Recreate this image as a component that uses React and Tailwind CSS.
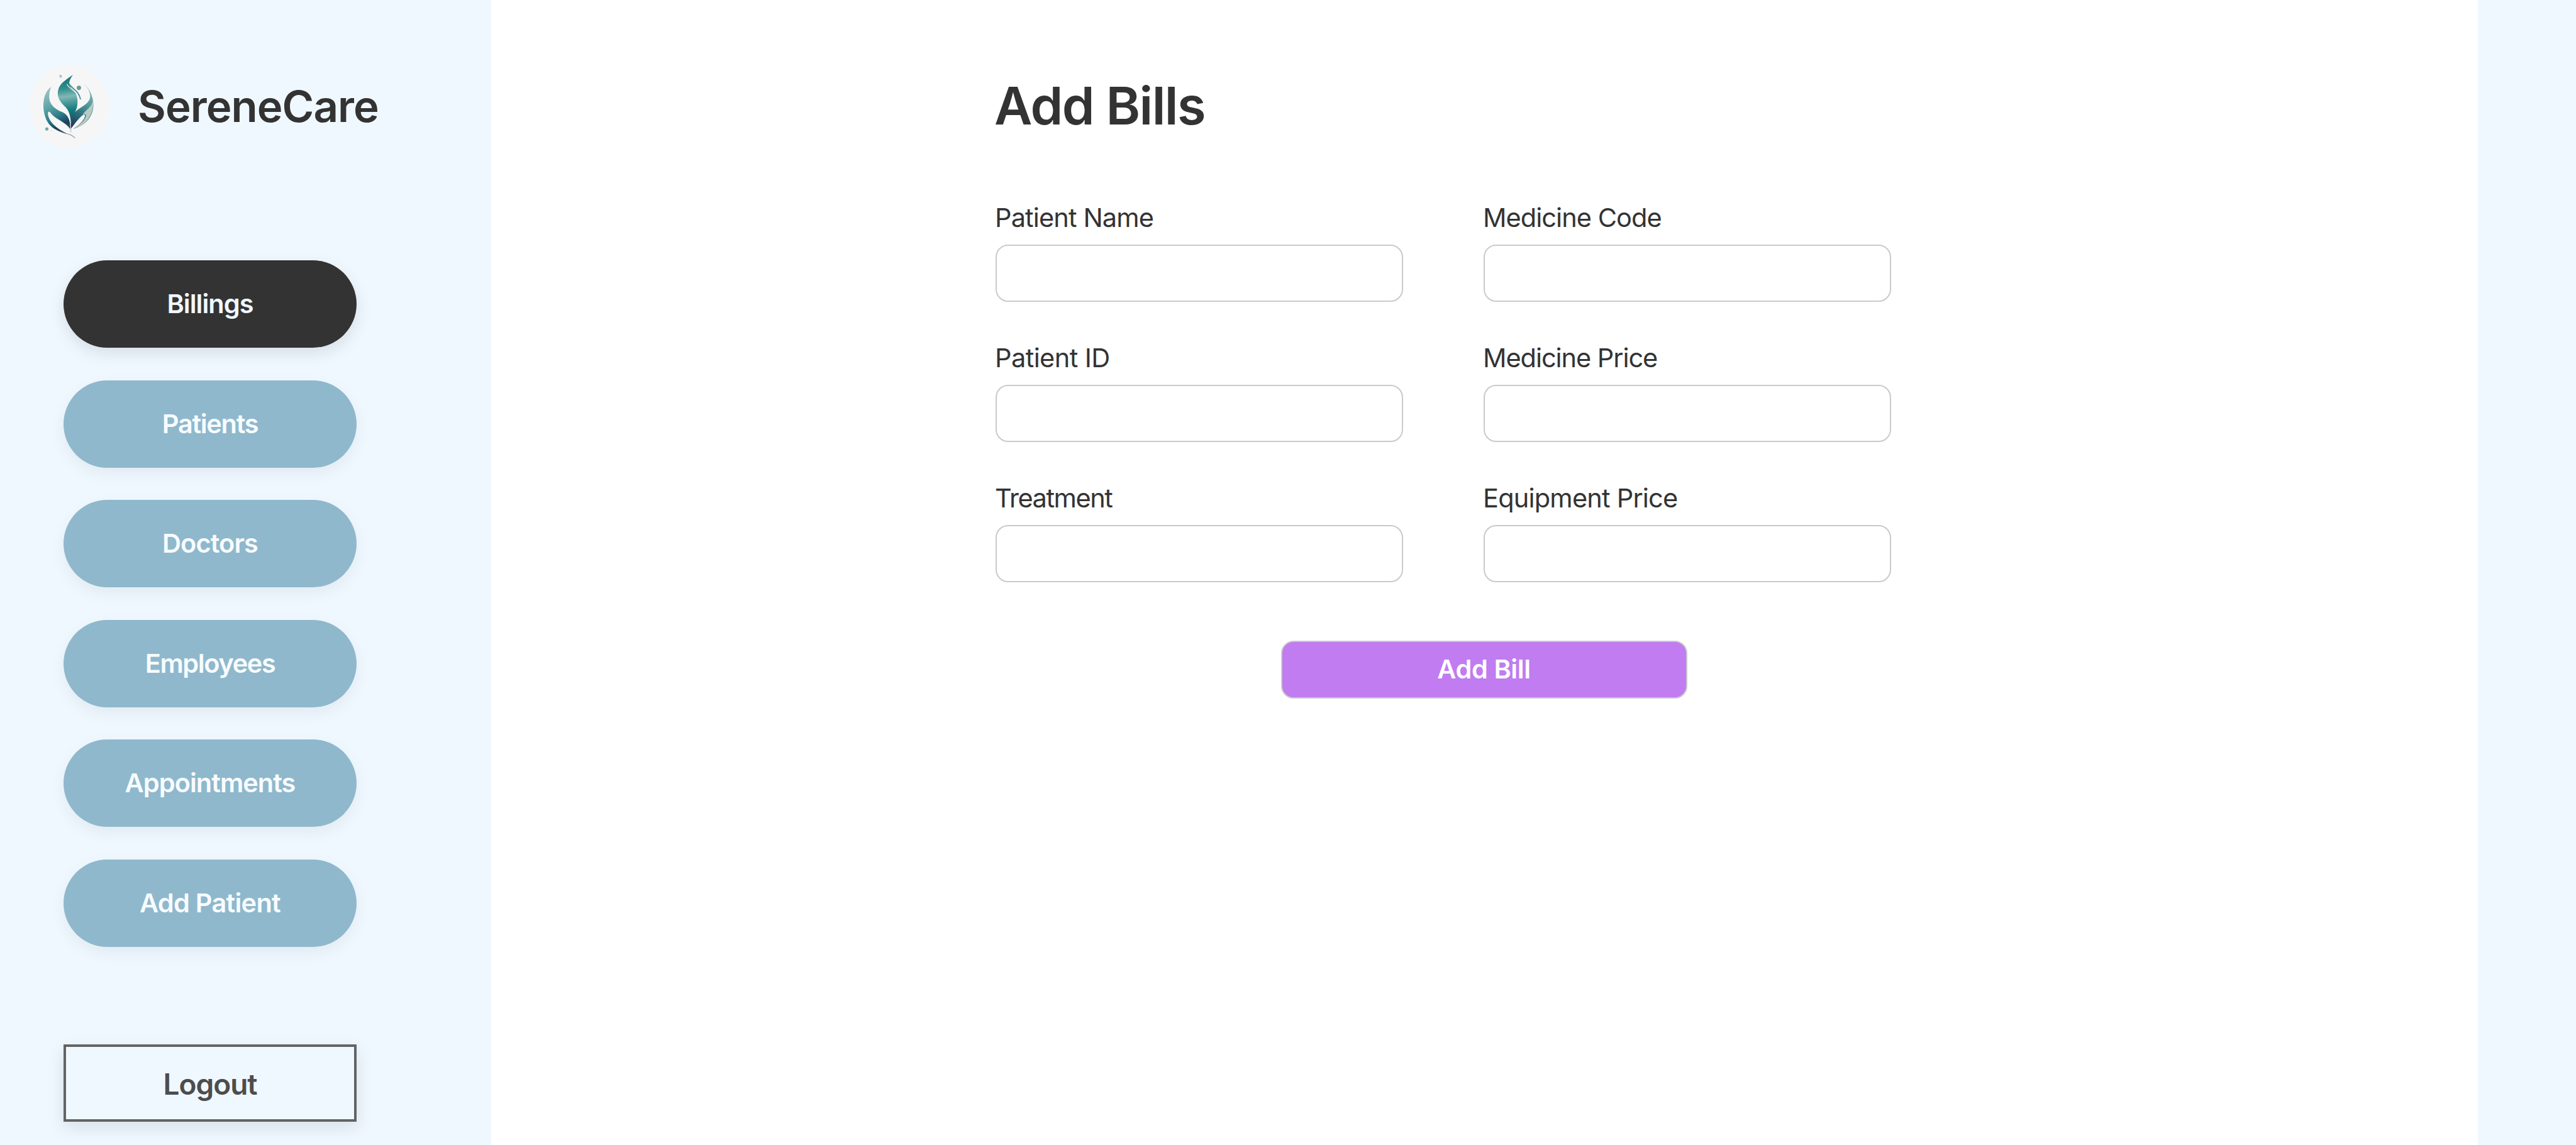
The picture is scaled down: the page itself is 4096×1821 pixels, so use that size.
const navItems = [
  { label: "Billings", active: true, tracking: "tracking-[-1px]" },
  { label: "Patients", tracking: "tracking-[-1.3px]" },
  { label: "Doctors", tracking: "tracking-[-0.9px]" },
  { label: "Employees", tracking: "tracking-[-1.4px]" },
  { label: "Appointments", tracking: "tracking-[-0.98px]" },
  { label: "Add Patient", tracking: "tracking-[-0.75px]" },
];

const fields = [
  { label: "Patient Name", tracking: "tracking-[-0.87px]" },
  { label: "Medicine Code", tracking: "tracking-[-0.96px]" },
  { label: "Patient ID", tracking: "tracking-[-0.58px]" },
  { label: "Medicine Price", tracking: "tracking-[-1.06px]" },
  { label: "Treatment", tracking: "tracking-[-1.45px]" },
  { label: "Equipment Price", tracking: "tracking-[-0.8px]" },
];

function Logo() {
  return (
    <svg
      className="h-[132px] w-[129px] shrink-0"
      viewBox="40 58 448 459"
      preserveAspectRatio="none"
      aria-hidden="true"
    >
      <defs>
        <linearGradient id="flame" x1="235" y1="114" x2="275" y2="412" gradientUnits="userSpaceOnUse">
          <stop offset="0" stopColor="#0d7377" />
          <stop offset="0.25" stopColor="#2f8e8e" />
          <stop offset="0.4" stopColor="#83b7b5" />
          <stop offset="0.5" stopColor="#4f9d9e" />
          <stop offset="0.65" stopColor="#147c80" />
          <stop offset="0.85" stopColor="#1c5168" />
          <stop offset="1" stopColor="#223a5a" />
        </linearGradient>
        <linearGradient id="leftLeaf" x1="140" y1="180" x2="268" y2="412" gradientUnits="userSpaceOnUse">
          <stop offset="0" stopColor="#a3cac8" />
          <stop offset="0.4" stopColor="#5ba3a5" />
          <stop offset="0.65" stopColor="#2c7c85" />
          <stop offset="0.85" stopColor="#1b3f5c" />
          <stop offset="1" stopColor="#33506b" />
        </linearGradient>
        <linearGradient id="rightLeaf" x1="390" y1="200" x2="272" y2="400" gradientUnits="userSpaceOnUse">
          <stop offset="0" stopColor="#8fb8b5" />
          <stop offset="0.35" stopColor="#4d9b9d" />
          <stop offset="0.65" stopColor="#2a6f7c" />
          <stop offset="1" stopColor="#1e3353" />
        </linearGradient>
      </defs>
      <ellipse cx="264" cy="287.5" rx="224" ry="229.5" fill="#f6f6f6" />
      <path d="M163 180 C120 208 110 285 130 345 C145 400 195 428 262 444 C205 418 150 380 145 330 C144 315 152 312 160 325 C185 360 245 375 268 414 C270 370 258 335 225 320 C180 302 152 275 152 235 C152 212 156 198 163 180Z" fill="url(#leftLeaf)" />
      <path d="M345 165 C372 190 388 230 372 255 C350 290 300 300 284 335 C272 365 271 390 272 412 C290 390 318 348 342 334 C362 330 345 375 286 412 C350 395 396 345 396 280 C396 235 376 192 345 165Z" fill="url(#rightLeaf)" />
      <path d="M394 248 C392 290 360 300 335 335 C342 328 360 328 354 345 C347 368 315 395 286 412 C350 395 402 340 394 248Z" fill="#b9c9c4" />
      <path d="M282 114 C260 132 220 152 205 186 C190 228 205 258 240 290 C264 314 271 345 272 392 C276 340 302 318 307 284 C312 250 305 214 282 194 C264 178 260 165 264 150 C268 136 276 125 282 114Z" fill="url(#flame)" />
      <path d="M250 165 C262 196 304 198 320 242" fill="none" stroke="#eef5f4" strokeWidth="4" />
      <path d="M262 164 C274 188 316 200 325 250" fill="none" stroke="#3c898d" strokeWidth="6" />
      <path d="M271 408 L271 432" stroke="#c4ced4" strokeWidth="6" />
      <path d="M256 441 C276 446 286 454 295 464" fill="none" stroke="#8fa3ae" strokeWidth="4" />
      <rect x="208" y="114" width="14" height="15" rx="3" fill="#adc5d3" />
      <circle cx="316" cy="186" r="12" fill="#6a9a98" />
      <circle cx="139" cy="413" r="9" fill="#6caaa9" />
      <circle cx="164" cy="424" r="4" fill="#dde6e5" />
    </svg>
  );
}

function NavButton({ label, active, tracking }) {
  const tone = active
    ? "bg-[#333333] text-[#f0f8ff] shadow-[0_9px_26px_rgba(0,0,0,0.1)]"
    : "bg-[#8fb8cc] text-[#f8fcff] shadow-[0_9px_26px_rgba(0,0,0,0.06)]";
  return (
    <button
      className={`flex h-[139px] w-[466px] items-center justify-center rounded-full text-[41.5px] font-semibold ${tracking} ${tone}`}
    >
      {label}
    </button>
  );
}

function Field({ label, tracking }) {
  return (
    <label className="flex flex-col gap-[18px]">
      <span className={`-ml-px text-[41.5px] leading-[50px] ${tracking}`}>{label}</span>
      <input className="h-[91px] w-full rounded-[20px] border-2 border-[#cacaca] bg-white px-6 text-[41.5px] outline-none" />
    </label>
  );
}

export default function App() {
  return (
    <div className="flex h-[1821px] w-[4096px] overflow-hidden bg-[#f0f8ff] font-['Inter',sans-serif] text-[#333333]">
      <aside className="flex w-[781px] shrink-0 flex-col pt-[103px]">
        <div className="flex items-center gap-[44px] pl-[46px]">
          <Logo />
          <span className="text-[69px] leading-[84px] font-semibold tracking-[-0.97px]">SereneCare</span>
        </div>
        <nav className="mt-[179px] flex flex-col gap-[51.5px] pl-[101px]">
          {navItems.map((item) => (
            <NavButton key={item.label} {...item} />
          ))}
        </nav>
        <button className="mt-[155px] ml-[101px] flex h-[123px] w-[466px] items-center justify-center border-[4px] border-[#636363] bg-[#f0f8ff] pt-1 text-[46px] font-semibold tracking-[-1px] text-[#4d4d4d] shadow-[0_9px_26px_rgba(0,0,0,0.1)]">
          Logout
        </button>
      </aside>
      <main className="flex w-[3159px] shrink-0 flex-col bg-white pt-[118px]">
        <h1 className="ml-[800px] text-[83px] leading-[100px] font-semibold tracking-[-1.56px]">Add Bills</h1>
        <div className="mt-[103px] ml-[802px] grid w-[1424px] grid-cols-2 gap-x-[128px] gap-y-[64px]">
          {fields.map((field) => (
            <Field key={field.label} {...field} />
          ))}
        </div>
        <button className="mt-[93px] mr-[2px] flex h-[92px] w-[646px] items-center justify-center self-center rounded-[20px] border-2 border-[#cacaca] bg-[#c07cf0] pb-[2px] text-[41.5px] font-semibold tracking-[-0.41px] text-white">
          Add Bill
        </button>
      </main>
    </div>
  );
}
